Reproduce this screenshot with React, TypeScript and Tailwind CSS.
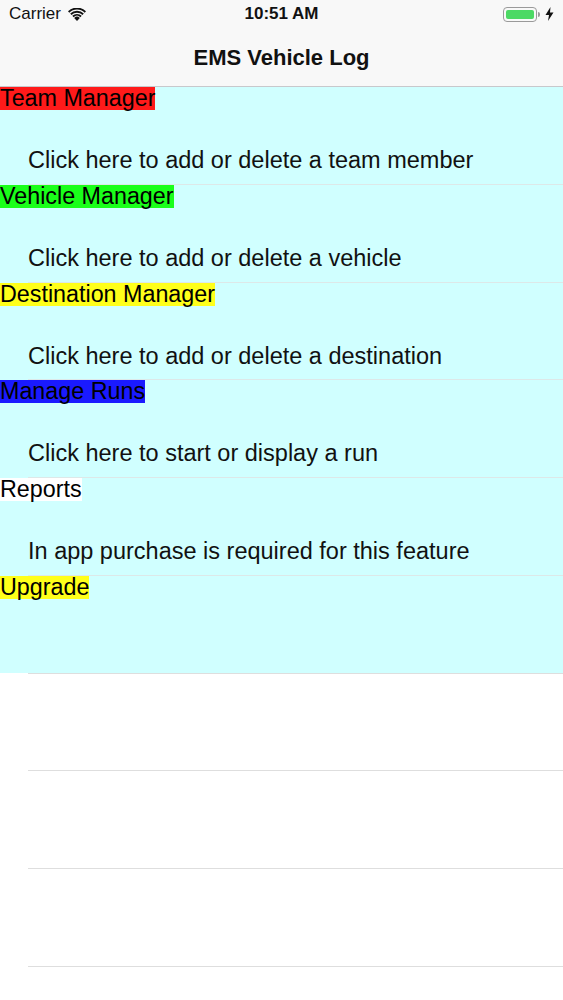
const rows = [
  { title: "Team Manager", titleBg: "bg-[#ff1a1a]", detail: "Click here to add or delete a team member" },
  { title: "Vehicle Manager", titleBg: "bg-[#1aff1a]", detail: "Click here to add or delete a vehicle" },
  { title: "Destination Manager", titleBg: "bg-[#ffff1a]", detail: "Click here to add or delete a destination" },
  { title: "Manage Runs", titleBg: "bg-[#1a1aff]", detail: "Click here to start or display a run" },
  { title: "Reports", titleBg: "bg-white", detail: "In app purchase is required for this feature" },
  { title: "Upgrade", titleBg: "bg-[#ffff1a]", detail: "" },
];

function Wifi() {
  return (
    <svg width="18" height="13" viewBox="0 0 18 13" className="ml-[7px]">
      <path d="M9 13 L6.2 9.9 A4 4 0 0 1 11.8 9.9 Z" fill="#111" />
      <path d="M4.3 7.8 A6.8 6.8 0 0 1 13.7 7.8 L12.4 9.2 A5 5 0 0 0 5.6 9.2 Z" fill="#111" />
      <path d="M2.2 5.6 A9.8 9.8 0 0 1 15.8 5.6 L14.5 7 A7.9 7.9 0 0 0 3.5 7 Z" fill="#111" />
      <path d="M0 3.3 A12.8 12.8 0 0 1 18 3.3 L16.7 4.7 A10.9 10.9 0 0 0 1.3 4.7 Z" fill="#111" />
    </svg>
  );
}

function Battery() {
  return (
    <div className="flex items-center">
      <div className="flex h-[15px] w-[34px] items-center rounded-[4px] border border-[#9a9a9a] p-[2px]">
        <div className="h-full w-full rounded-[2px] bg-[#4cd964]" />
      </div>
      <div className="ml-[1px] h-[5px] w-[2px] rounded-r-sm bg-[#9a9a9a]" />
      <svg width="9" height="14" viewBox="0 0 9 14" className="ml-[5px]">
        <path d="M5.5 0 L0.5 8 H4 L3 14 L8.5 5.5 H5 Z" fill="#111" />
      </svg>
    </div>
  );
}

export default function App() {
  return (
    <div className="min-h-[1000px] w-full bg-white" style={{ fontFamily: '"Liberation Sans", Arial, sans-serif' }}>
      <header className="h-[87px] border-b border-[#c8c8cc] bg-[#f8f8f8]">
        <div className="flex h-[28px] items-center justify-between px-[9px] text-[17px] text-[#111]">
          <div className="flex w-[120px] items-center">
            <span>Carrier</span>
            <Wifi />
          </div>
          <span className="font-semibold">10:51 AM</span>
          <div className="flex w-[120px] justify-end">
            <Battery />
          </div>
        </div>
        <div className="flex h-[58px] items-center justify-center text-[22px] font-bold text-[#111]">
          EMS Vehicle Log
        </div>
      </header>

      {rows.map((row, i) => (
        <div key={row.title} className="flex h-[97.75px] flex-col">
          <div className="flex-1 bg-[#d0ffff] text-black">
            <span className={`inline-block h-[23px] text-[23.3px] leading-[22px] ${row.titleBg}`}>{row.title}</span>
            {row.detail && (
              <div className="mt-[33px] pl-[28px] text-[23.5px] leading-[28px] text-[#111]">{row.detail}</div>
            )}
          </div>
          {i < rows.length - 1 ? (
            <div className="bg-[#d0ffff] pl-[28px]">
              <div className="h-px bg-[#dde8e8]" />
            </div>
          ) : (
            <div className="ml-[28px] h-px bg-[#dedede]" />
          )}
        </div>
      ))}

      {[0, 1, 2].map((i) => (
        <div key={i} className="flex h-[97.75px] flex-col">
          <div className="flex-1" />
          <div className="ml-[28px] h-px bg-[#dedede]" />
        </div>
      ))}
    </div>
  );
}
